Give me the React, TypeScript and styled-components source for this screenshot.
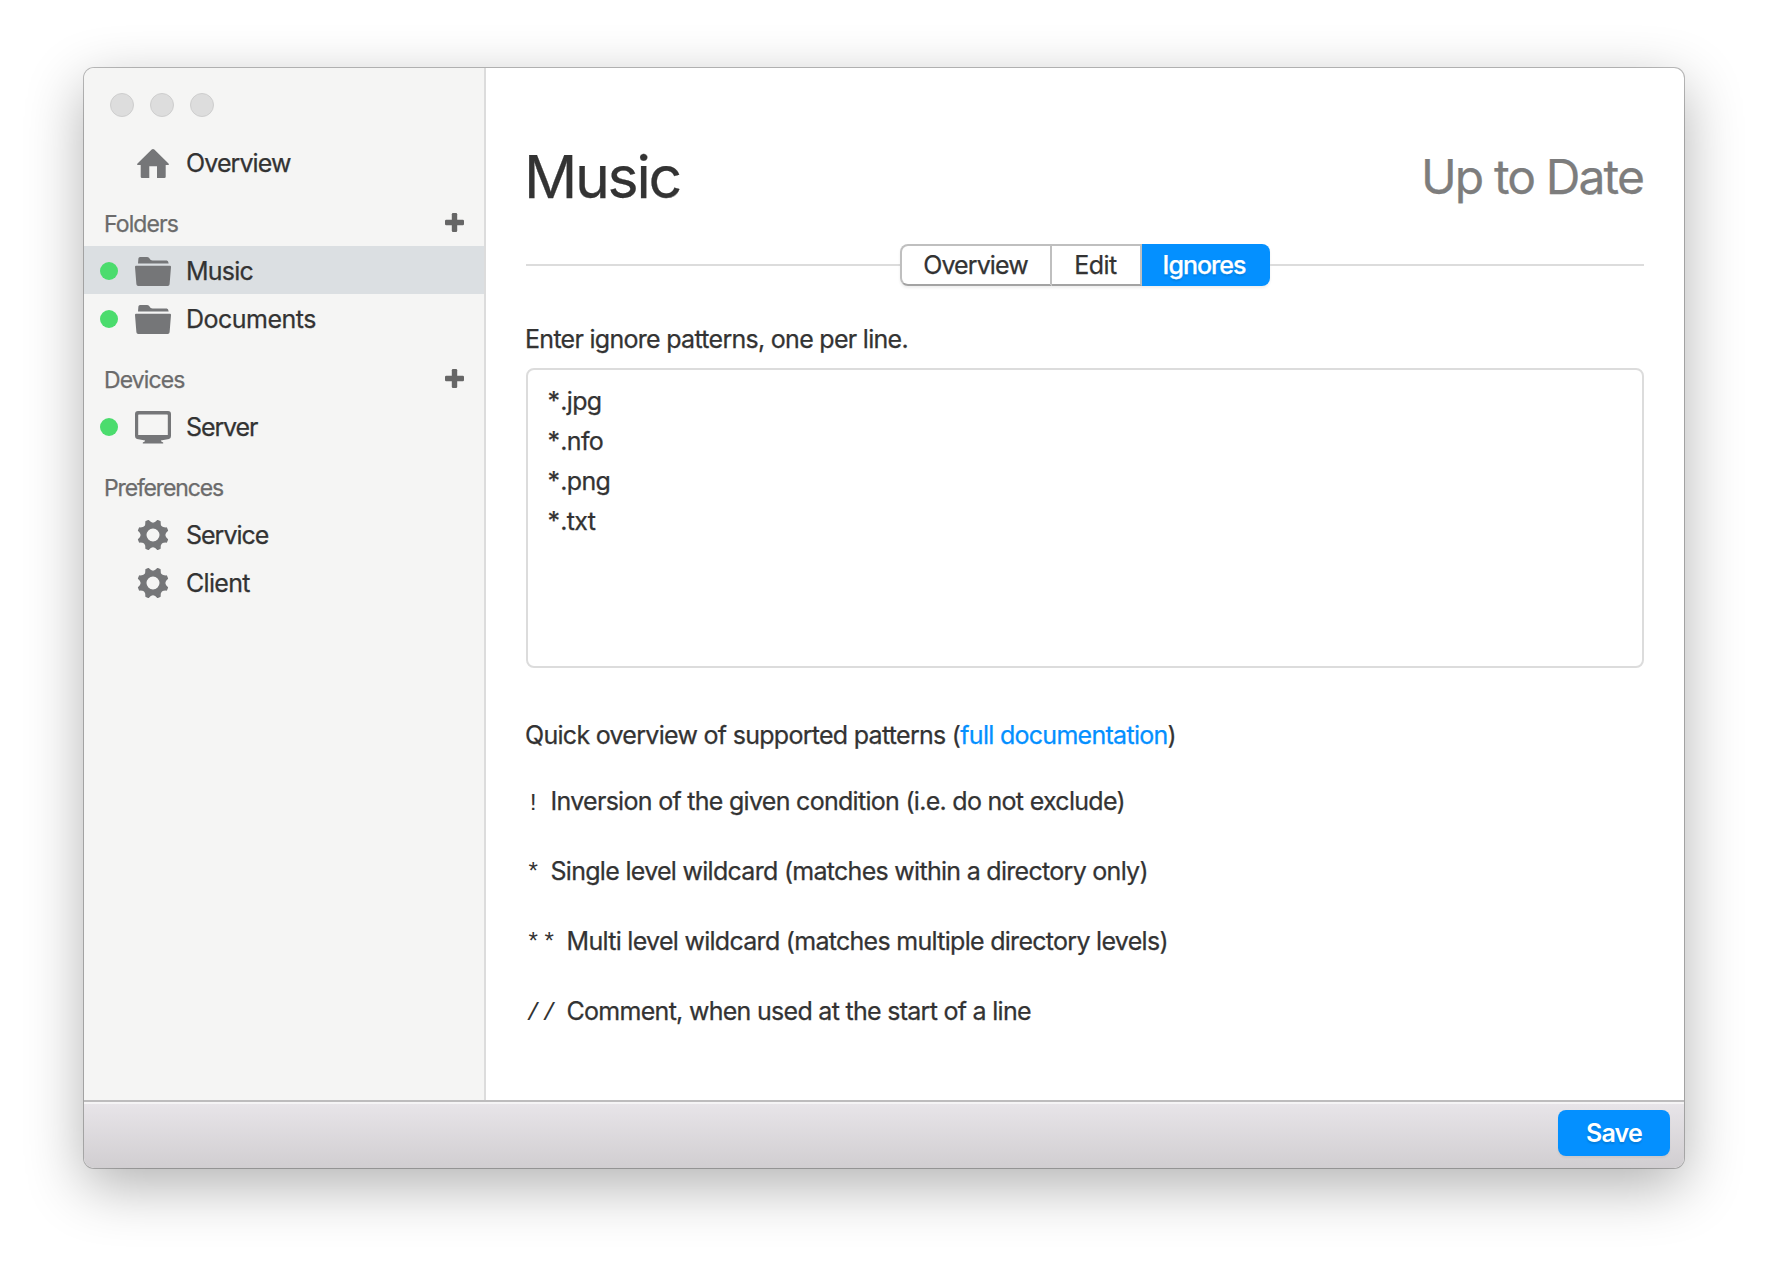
import React from 'react';
import styled, { createGlobalStyle } from 'styled-components';

const GlobalStyle = createGlobalStyle`
  *, *::before, *::after { box-sizing: border-box; }
  body {
    margin: 0;
    background: #fff;
    color: #333;
    font-family: Inter, "Liberation Sans", sans-serif;
    font-size: 25px;
    line-height: 40px;
    letter-spacing: -0.71px;
    -webkit-text-stroke: 0.25px currentColor;
  }
`;

const Desktop = styled.div`
  width: 1768px;
  height: 1268px;
  padding: 68px 84px 100px;
  overflow: hidden;
`;

const Window = styled.div`
  display: flex;
  flex-direction: column;
  width: 1600px;
  height: 1100px;
  border-radius: 10px;
  overflow: hidden;
  background: #fff;
  box-shadow:
    0 0 0 1px rgba(0, 0, 0, 0.25),
    0 18px 58px rgba(0, 0, 0, 0.31);
`;

const Body = styled.div`
  display: flex;
  flex: 1;
  min-height: 0;
`;

const Sidebar = styled.nav`
  width: 402px;
  border-right: 2px solid #dcdcdc;
  background: #f5f5f4;
`;

const TrafficLights = styled.div`
  display: flex;
  gap: 16px;
  padding: 25px 26px 21px;
`;

const Light = styled.span`
  width: 24px;
  height: 24px;
  border: 1px solid #cecece;
  border-radius: 50%;
  background: #dddddd;
`;

const NavRow = styled.div<{ $active?: boolean }>`
  display: flex;
  align-items: center;
  height: 48px;
  padding: 2px 16px 0;
  background: ${(p) => (p.$active ? '#dbdfe2' : 'transparent')};
`;

const Status = styled.span<{ $on?: boolean }>`
  width: 18px;
  height: 18px;
  margin-right: 17px;
  border-radius: 50%;
  background: ${(p) => (p.$on ? '#4bdc6d' : 'transparent')};
`;

const IconSlot = styled.span`
  display: flex;
  align-items: center;
  justify-content: center;
  width: 36px;
  height: 36px;
  margin-right: 15px;
  color: #757678;
`;

const NavLabel = styled.span<{ $track: number }>`
  letter-spacing: ${(p) => p.$track}px;
`;

const NavHeader = styled.div<{ $track: number }>`
  display: flex;
  align-items: center;
  justify-content: space-between;
  height: 60px;
  padding: 16px 20px 0;
  color: #6b6b6b;
  font-size: 23px;
  letter-spacing: ${(p) => p.$track}px;
`;

const AddButton = styled.button`
  display: flex;
  margin: 0 0 3px;
  padding: 0;
  border: 0;
  background: none;
  color: #666;
`;

const Main = styled.main`
  flex: 1;
  padding: 73px 40px 0;
`;

const TitleBar = styled.header`
  display: flex;
  align-items: center;
  justify-content: space-between;
  height: 72px;
`;

const Title = styled.h1`
  margin: 0 0 0 -2px;
  font-size: 59px;
  font-weight: 400;
  line-height: 72px;
  letter-spacing: -2.3px;
`;

const SyncState = styled.div`
  margin-right: 1px;
  color: #7d7d7d;
  font-size: 48px;
  line-height: 72px;
  letter-spacing: -1.9px;
`;

const TabBar = styled.div`
  display: flex;
  align-items: center;
  margin-top: 31px;

  &::before,
  &::after {
    content: '';
    flex: 1;
    height: 2px;
    background: #dcdcdc;
  }
`;

const Tabs = styled.div`
  display: flex;
  height: 42px;
  border-radius: 8px;
  box-shadow: 0 2px 3px rgba(0, 0, 0, 0.07);
`;

const Tab = styled.button<{ $width: number; $track: number; $active?: boolean }>`
  width: ${(p) => p.$width}px;
  height: 42px;
  padding: 0 1px 0 0;
  border: 2px solid #bfbfbf;
  border-bottom-color: #a3a3a3;
  border-left-width: 0;
  background: #fff;
  color: #333;
  font: inherit;
  line-height: 38px;
  letter-spacing: ${(p) => p.$track}px;

  &:first-child {
    border-left-width: 2px;
    border-radius: 8px 0 0 8px;
  }

  &:last-child {
    border-radius: 0 8px 8px 0;
  }

  ${(p) =>
    p.$active &&
    `
    padding-right: 4px;
    border: 0;
    background: #0490ff;
    color: #fff;
    font-weight: 500;
    line-height: 42px;
    text-shadow: 0 2px 2px rgba(0, 0, 0, 0.12);
  `}
`;

const FieldLabel = styled.label`
  display: block;
  margin: 33px 0 0 -1px;
`;

const PatternField = styled.div`
  height: 300px;
  margin-top: 9px;
  padding: 11px 19.5px;
  border: 2px solid #dcdcdc;
  border-radius: 8px;
`;

const PatternLine = styled.div``;

const Wildcard = styled.span`
  letter-spacing: 0.3px;
`;

const Intro = styled.p`
  margin: 47px 0 26px -1px;
`;

const DocLink = styled.a`
  color: #0490ff;
  text-decoration: none;
`;

const PatternHelp = styled.p`
  margin: 0 0 30px;
`;

const Code = styled.code`
  margin-right: 8.5px;
  font-family: "Liberation Mono", monospace;
  font-size: 24px;
  line-height: 1;
  letter-spacing: 1.6px;
  -webkit-text-stroke: 0;
`;

const Footer = styled.footer`
  display: flex;
  justify-content: flex-end;
  height: 68px;
  padding: 8px 14px 0;
  border-top: 2px solid #bdbcbd;
  background: linear-gradient(#e8e5e9, #d1ced1);
  box-shadow: inset 0 2px 0 #f5f4f5;
`;

const SaveButton = styled.button`
  width: 112px;
  height: 46px;
  padding: 0;
  border: 0;
  border-radius: 8px;
  background: #0490ff;
  box-shadow: 0 2px 2px rgba(0, 0, 0, 0.05);
  color: #fff;
  font: inherit;
  font-weight: 600;
  line-height: 46px;
  letter-spacing: -0.8px;
  text-shadow: 0 2px 2px rgba(0, 0, 0, 0.14);
  -webkit-text-stroke: 0;
`;

const HomeIcon = () => (
  <svg width="32" height="29" viewBox="0 0 32 29" fill="currentColor">
    <path d="M14.7.6Q16-.5 17.3.6L31.5 14.6Q32.4 16 31 16H28.7V27.7Q28.7 29 27.4 29H20V17.2H12.3V29H5Q3.7 29 3.7 27.7V16H1Q-.4 16 .5 14.6Z" />
  </svg>
);

const FolderIcon = () => (
  <svg width="36" height="29" viewBox="0 0 36 29" fill="currentColor">
    <path d="M3 6.4L3.4 1.6Q3.6 0 5 0H12.2C14.6 0 14.8 3.5 17.6 3.5H31.8Q33.2 3.5 33.7 6.4Z" />
    <path d="M1 8.8H35Q36.1 8.8 36 10L34.6 27.3Q34.4 28.9 32.8 28.9H3.2Q1.6 28.9 1.4 27.3L0 10Q-.1 8.8 1 8.8Z" />
  </svg>
);

const MonitorIcon = () => (
  <svg width="36" height="33" viewBox="0 0 36 33" fill="currentColor">
    <path
      fillRule="evenodd"
      d="M3 0H33Q36 0 36 3V25Q36 27.6 34 28L25.8 29.6Q25.6 30.4 28.2 31.5V32.6H7.8V31.5Q10.4 30.4 10.2 29.6L2 28Q0 27.6 0 25V3Q0 0 3 0ZM3.9 3.4Q3.2 3.4 3.2 4.1V24H32.8V4.1Q32.8 3.4 32.1 3.4Z"
    />
  </svg>
);

const polar = (deg: number, r: number) => {
  const a = (deg * Math.PI) / 180;
  return `${(15 + r * Math.sin(a)).toFixed(2)} ${(15 - r * Math.cos(a)).toFixed(2)}`;
};

const gearOutline =
  [0, 1, 2, 3, 4, 5, 6, 7]
    .map((i) => {
      const c = 22.5 + i * 45;
      return `${i ? 'L' : 'M'}${polar(c - 5, 15.1)}L${polar(c + 5, 15.1)}Q${polar(c + 22.5, 8.9)} ${polar(c + 40, 15.1)}`;
    })
    .join('') + 'ZM15 7.8a7.2 7.2 0 1 0 0 14.4a7.2 7.2 0 1 0 0-14.4Z';

const GearIcon = () => (
  <svg width="32" height="32" viewBox="-1 -1 32 32" fill="currentColor">
    <path fillRule="evenodd" d={gearOutline} stroke="currentColor" strokeWidth="1.4" strokeLinejoin="round" />
  </svg>
);

const PlusIcon = () => (
  <svg width="19" height="19" viewBox="0 0 19 19" fill="currentColor">
    <rect x="6.8" y="0" width="5.4" height="19" rx="1.2" />
    <rect x="0" y="6.8" width="19" height="5.4" rx="1.2" />
  </svg>
);

type ItemProps = {
  icon: React.ReactNode;
  label: string;
  track: number;
  on?: boolean;
  active?: boolean;
};

const NavItem = ({ icon, label, track, on, active }: ItemProps) => (
  <NavRow $active={active}>
    <Status $on={on} />
    <IconSlot>{icon}</IconSlot>
    <NavLabel $track={track}>{label}</NavLabel>
  </NavRow>
);

const Section = ({ title, track, addable }: { title: string; track: number; addable?: boolean }) => (
  <NavHeader $track={track}>
    {title}
    {addable && (
      <AddButton aria-label={`Add to ${title}`}>
        <PlusIcon />
      </AddButton>
    )}
  </NavHeader>
);

const ignored = ['.jpg', '.nfo', '.png', '.txt'];

const help = [
  ['!', 'Inversion of the given condition (i.e. do not exclude)'],
  ['*', 'Single level wildcard (matches within a directory only)'],
  ['**', 'Multi level wildcard (matches multiple directory levels)'],
  ['//', 'Comment, when used at the start of a line'],
];

export default function App() {
  return (
    <>
      <GlobalStyle />
      <Desktop>
        <Window>
          <Body>
            <Sidebar>
              <TrafficLights>
                <Light />
                <Light />
                <Light />
              </TrafficLights>
              <NavItem icon={<HomeIcon />} label="Overview" track={-0.9} />
              <Section title="Folders" track={-0.9} addable />
              <NavItem icon={<FolderIcon />} label="Music" track={-0.75} on active />
              <NavItem icon={<FolderIcon />} label="Documents" track={-0.5} on />
              <Section title="Devices" track={-0.9} addable />
              <NavItem icon={<MonitorIcon />} label="Server" track={-1.1} on />
              <Section title="Preferences" track={-1.15} />
              <NavItem icon={<GearIcon />} label="Service" track={-1} />
              <NavItem icon={<GearIcon />} label="Client" track={-0.7} />
            </Sidebar>
            <Main>
              <TitleBar>
                <Title>Music</Title>
                <SyncState>Up to Date</SyncState>
              </TitleBar>
              <TabBar>
                <Tabs>
                  <Tab $width={152} $track={-0.9}>Overview</Tab>
                  <Tab $width={90} $track={-0.5}>Edit</Tab>
                  <Tab $width={128} $track={-1} $active>Ignores</Tab>
                </Tabs>
              </TabBar>
              <FieldLabel>Enter ignore patterns, one per line.</FieldLabel>
              <PatternField role="textbox">
                {ignored.map((ext) => (
                  <PatternLine key={ext}>
                    <Wildcard>*</Wildcard>
                    {ext}
                  </PatternLine>
                ))}
              </PatternField>
              <Intro>
                Quick overview of supported patterns (<DocLink>full documentation</DocLink>)
              </Intro>
              {help.map(([code, text]) => (
                <PatternHelp key={code}>
                  <Code>{code}</Code>
                  {text}
                </PatternHelp>
              ))}
            </Main>
          </Body>
          <Footer>
            <SaveButton>Save</SaveButton>
          </Footer>
        </Window>
      </Desktop>
    </>
  );
}
